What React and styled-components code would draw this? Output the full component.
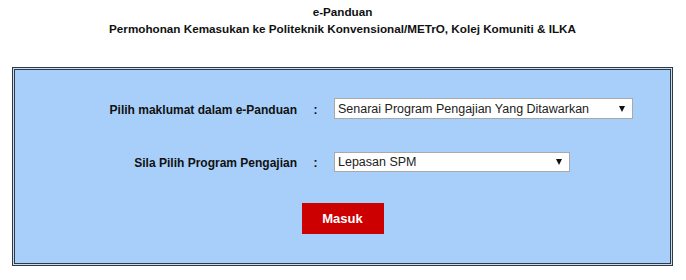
import React, { useState } from "react";
import styled, { createGlobalStyle } from "styled-components";

const GlobalStyle = createGlobalStyle`
  body {
    margin: 0;
    background: #fff;
    font-family: "Liberation Sans", Arial, sans-serif;
    color: #111;
  }
`;

const Page = styled.div`
  width: 686px;
  padding: 3px 13px 0 12px;
  box-sizing: border-box;
`;

const Header = styled.div`
  text-align: center;
  font-weight: bold;
  font-size: 11.7px;
  line-height: 17px;
`;

const Panel = styled.div`
  margin-top: 30px;
  border: 1px solid #2b3b4c;
  padding: 1px;
  background: #cfdbe6;
`;

const Inner = styled.form`
  border: 1px solid #2b3b4c;
  background: #a8cff9;
  height: 195px;
  box-sizing: border-box;
  padding-top: 28px;
  display: flex;
  flex-direction: column;
  align-items: stretch;
`;

const Row = styled.div`
  display: grid;
  grid-template-columns: 282px 37px 1fr;
  align-items: center;
  height: 21px;
  margin-bottom: ${(p) => p.gap}px;
`;

const Label = styled.label`
  text-align: right;
  font-weight: bold;
  font-size: 12px;
  padding-top: 3px;
`;

const Colon = styled.span`
  text-align: center;
  font-weight: bold;
  font-size: 12px;
  padding-top: 3px;
`;

const SelectWrap = styled.span`
  position: relative;
  display: inline-block;
  width: ${(p) => p.w}px;
  height: ${(p) => p.h}px;
`;

const Select = styled.select`
  appearance: none;
  -webkit-appearance: none;
  width: 100%;
  height: 100%;
  box-sizing: border-box;
  border: 1px solid #a9a9a9;
  border-radius: 0;
  background: #fff;
  font-family: "Liberation Sans", Arial, sans-serif;
  font-size: 12.5px;
  color: #222;
  padding: 0 0 0 3px;
  outline: none;
`;

const Arrow = styled.span`
  position: absolute;
  right: 8px;
  top: 50%;
  transform: translateY(-50%);
  pointer-events: none;
  width: 0;
  height: 0;
  border-left: 3px solid transparent;
  border-right: 3px solid transparent;
  border-top: 6px solid #111;
`;

const ButtonRow = styled.div`
  display: flex;
  justify-content: center;
`;

const Button = styled.button`
  width: 82px;
  height: 31px;
  border: none;
  background: #cc0000;
  color: #fff;
  font-family: "Liberation Sans", Arial, sans-serif;
  font-weight: bold;
  font-size: 13px;
  cursor: pointer;
`;

function Dropdown({ w, h, options, value, onChange }) {
  return (
    <SelectWrap w={w} h={h}>
      <Select value={value} onChange={(e) => onChange(e.target.value)}>
        {options.map((o) => (
          <option key={o}>{o}</option>
        ))}
      </Select>
      <Arrow />
    </SelectWrap>
  );
}

export default function App() {
  const [info, setInfo] = useState("Senarai Program Pengajian Yang Ditawarkan");
  const [prog, setProg] = useState("Lepasan SPM");

  return (
    <>
      <GlobalStyle />
      <Page>
        <Header>
          <div>e-Panduan</div>
          <div>Permohonan Kemasukan ke Politeknik Konvensional/METrO, Kolej Komuniti &amp; ILKA</div>
        </Header>
        <Panel>
          <Inner onSubmit={(e) => e.preventDefault()}>
            <Row gap={32}>
              <Label>Pilih maklumat dalam e-Panduan</Label>
              <Colon>:</Colon>
              <Dropdown
                w={299}
                h={21}
                value={info}
                onChange={setInfo}
                options={["Senarai Program Pengajian Yang Ditawarkan", "Syarat Kemasukan"]}
              />
            </Row>
            <Row gap={31}>
              <Label>Sila Pilih Program Pengajian</Label>
              <Colon>:</Colon>
              <Dropdown
                w={236}
                h={20}
                value={prog}
                onChange={setProg}
                options={["Lepasan SPM", "Lepasan STPM"]}
              />
            </Row>
            <ButtonRow>
              <Button type="submit">Masuk</Button>
            </ButtonRow>
          </Inner>
        </Panel>
      </Page>
    </>
  );
}
